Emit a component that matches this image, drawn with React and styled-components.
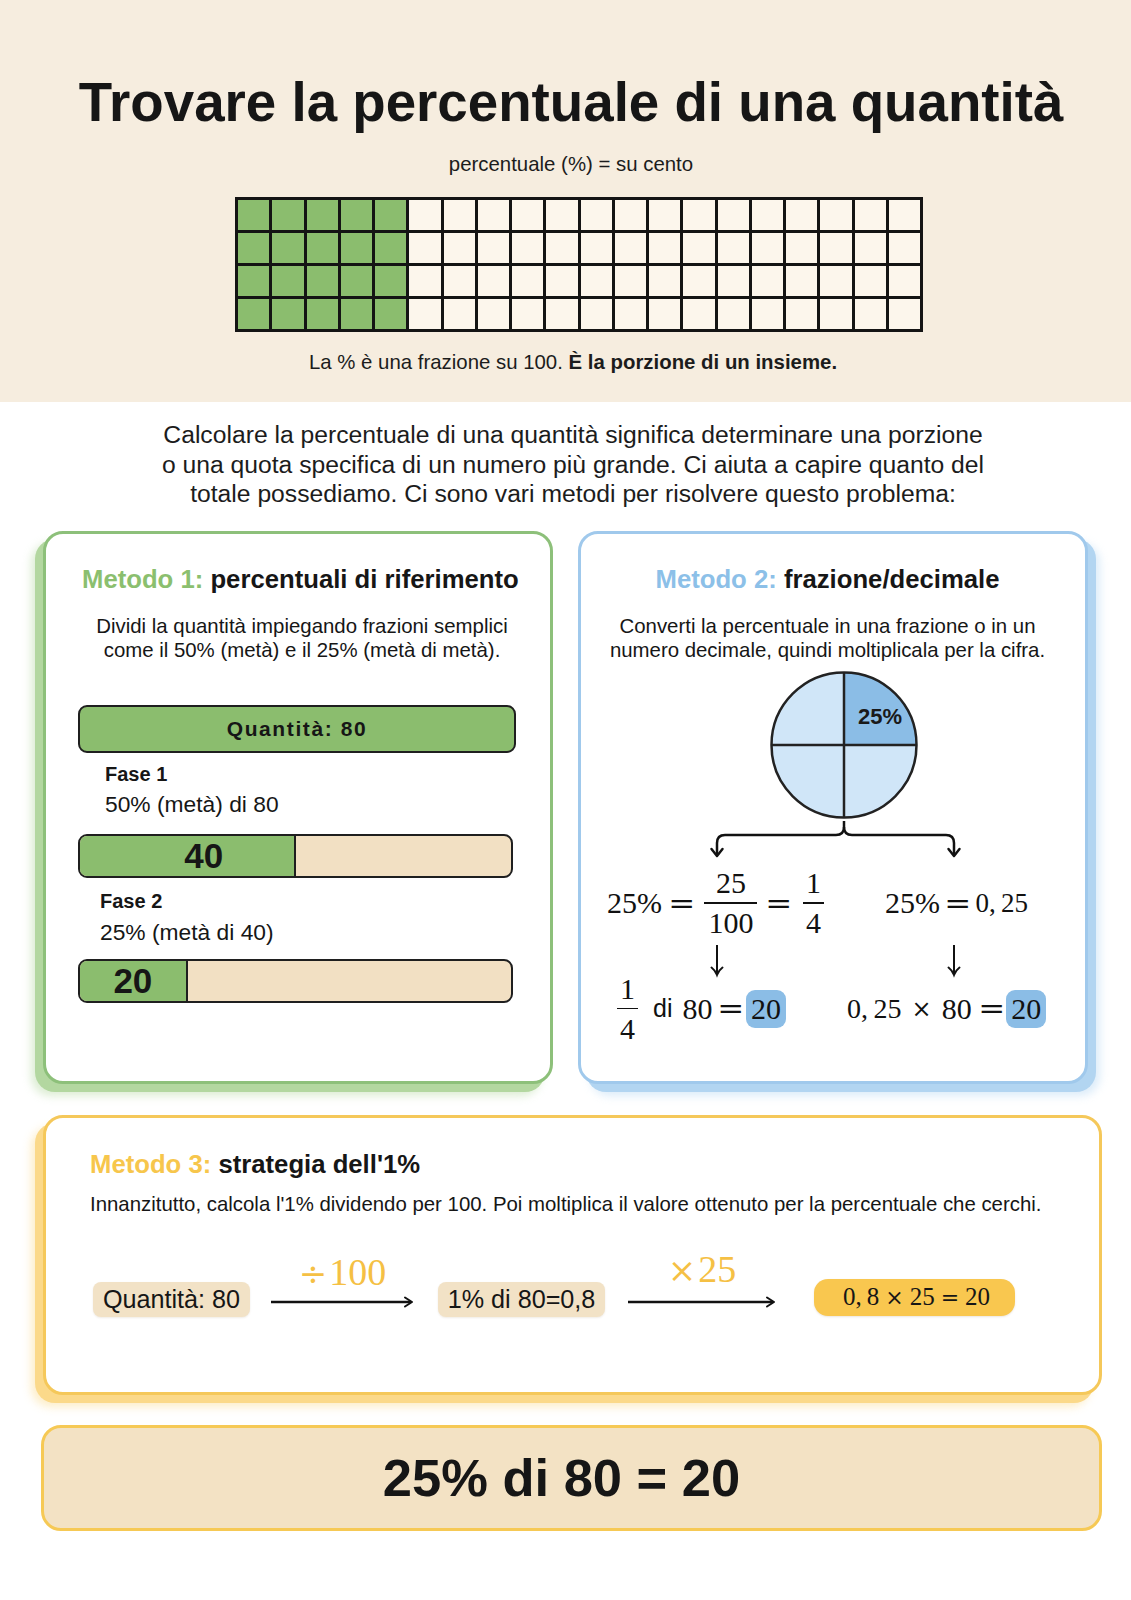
import React from 'react';
import styled, { createGlobalStyle } from 'styled-components';

const GlobalStyle = createGlobalStyle`
  html, body { margin: 0; padding: 0; background: #ffffff; }
  body { font-family: "Liberation Sans", Arial, sans-serif; color: #161616; }
  * { box-sizing: border-box; }
`;

const Page = styled.div`
  width: 1131px;
  min-height: 1600px;
  background: #ffffff;
  padding-bottom: 69px;
`;

const Header = styled.header`
  background: #f6eddf;
  padding: 70px 0 28px 11px;
  display: flex;
  flex-direction: column;
  align-items: center;
`;

const Title = styled.h1`
  margin: 0;
  font-size: 54.7px;
  line-height: 65px;
  font-weight: 700;
  color: #161616;
`;

const Sub = styled.p`
  margin: 17px 0 0;
  font-size: 20.4px;
  line-height: 24px;
  color: #1c1c1c;
`;

const HundredGrid = styled.div`
  margin: 21px 0 0 16px;
  display: grid;
  grid-template-columns: repeat(20, 31.25px);
  grid-auto-rows: 30px;
  gap: 3px;
  padding: 3px;
  background: #141414;
`;

const Cell = styled.div`
  background: ${(p) => (p.$filled ? '#8bbd6e' : '#fcf6ec')};
`;

const Caption = styled.p`
  margin: 18px 0 0 4px;
  font-size: 20.4px;
  line-height: 24px;
  color: #1c1c1c;
  b { font-weight: 700; }
`;

const Intro = styled.p`
  margin: 18px 0 0;
  padding-left: 15px;
  text-align: center;
  font-size: 24.7px;
  line-height: 29.5px;
  color: #1c1c1c;
`;

const CardsRow = styled.div`
  margin-top: 22px;
  padding-left: 43px;
  display: grid;
  grid-template-columns: 510px 510px;
  gap: 25px;
  align-items: stretch;
`;

const Card = styled.section`
  background: #ffffff;
  border: 3px solid ${(p) => p.$border};
  border-radius: 20px;
  box-shadow: ${(p) => p.$sx}px 8px 0 ${(p) => p.$shadow},
    ${(p) => p.$sx * 1.5}px 12px 8px ${(p) => p.$glow};
  padding: ${(p) => p.$pad};
`;

const CardTitle = styled.h2`
  margin: 0;
  padding: 0 ${(p) => p.$pr || 0}px 0 ${(p) => p.$pl || 0}px;
  font-size: 25.7px;
  line-height: 30.6px;
  font-weight: 700;
  color: #161616;
  text-align: ${(p) => p.$align || 'center'};
  white-space: nowrap;
`;

const Accent = styled.span`
  color: ${(p) => p.$color};
`;

const CardDesc = styled.p`
  margin: ${(p) => p.$mt || 21}px 0 0;
  padding: 0 ${(p) => p.$pr || 0}px 0 ${(p) => p.$pl || 0}px;
  font-size: 20.4px;
  line-height: ${(p) => p.$lh || 23.5}px;
  text-align: ${(p) => p.$align || 'center'};
  color: #161616;
  white-space: nowrap;
`;

const QuantityBar = styled.div`
  margin-top: 43px;
  height: 48px;
  border: 2.5px solid #1f1f1f;
  border-radius: 9px;
  background: #8bbd6e;
  display: flex;
  align-items: center;
  justify-content: center;
  font-size: 21px;
  font-weight: 700;
  letter-spacing: 1.6px;
  color: #161616;
`;

const StepLabel = styled.div`
  margin: ${(p) => p.$mt}px 0 0 ${(p) => p.$indent}px;
  font-size: 20px;
  line-height: 24px;
  font-weight: 700;
`;

const StepText = styled.div`
  margin: ${(p) => p.$mt}px 0 0 ${(p) => p.$indent}px;
  font-size: 22.8px;
  line-height: 26px;
`;

const SplitBar = styled.div`
  margin-top: ${(p) => p.$mt}px;
  width: 435px;
  height: 44px;
  border: 2.5px solid #1f1f1f;
  border-radius: 9px;
  overflow: hidden;
  display: flex;
  background: #f2e0c3;
`;

const Segment = styled.div`
  width: ${(p) => p.$pct}%;
  background: #8bbd6e;
  border-right: 2.5px solid #1f1f1f;
  display: flex;
  align-items: center;
  justify-content: center;
  padding-left: ${(p) => p.$shift || 0}px;
  font-size: 35px;
  font-weight: 700;
  color: #161616;
`;

const PieWrap = styled.div`
  margin: 9px 0 0 189px;
  width: 148px;
  height: 148px;
  svg { display: block; }
`;

const Brace = styled.svg`
  display: block;
  margin-top: 2px;
`;

const MathGrid = styled.div`
  margin-top: 9px;
  display: grid;
  grid-template-columns: 262px 242px;
  align-items: center;
`;

const MathCell = styled.div`
  display: flex;
  align-items: center;
  height: ${(p) => (p.$h ? `${p.$h}px` : 'auto')};
  margin-top: ${(p) => p.$mt || 0}px;
  padding-left: ${(p) => p.$x}px;
  font-family: "Liberation Serif", "DejaVu Serif", serif;
  font-size: 30px;
  color: #111111;
  white-space: nowrap;
  svg { display: block; overflow: visible; }
`;

const Decimal = styled.span`
  font-size: ${(p) => p.$fs || 30}px;
`;

const Op = styled.span`
  display: inline-block;
  margin: 0 ${(p) => p.$mr ?? p.$m ?? 8}px 0 ${(p) => p.$m ?? 8}px;
  font-family: "DejaVu Serif", "Liberation Serif", serif;
  font-size: ${(p) => p.$fs || 28}px;
  text-align: center;
  transform: scaleX(${(p) => p.$sx || 1.15});
`;

const Frac = styled.span`
  display: inline-flex;
  flex-direction: column;
  align-items: center;
`;

const Num = styled.span`
  line-height: 30px;
  padding: 0 ${(p) => p.$px || 4}px 4px;
`;

const FracBar = styled.span`
  align-self: stretch;
  height: 1.5px;
  background: #111111;
`;

const Den = styled.span`
  line-height: 30px;
  padding: 4.5px ${(p) => p.$px || 4}px 0;
`;

const SansWord = styled.span`
  font-family: "Liberation Sans", Arial, sans-serif;
  font-size: 25px;
  margin: 0 10px 0 15px;
`;

const Highlight = styled.span`
  background: #8bbde6;
  border-radius: 9px;
  padding: 4px 5px;
  line-height: 30px;
`;

const WideCard = styled(Card)`
  margin: 31px 0 0 43px;
  width: 1059px;
`;

const FlowRow = styled.div`
  margin-top: 34px;
  padding-left: 3px;
  display: flex;
  align-items: flex-end;
`;

const Chip = styled.div`
  margin-left: ${(p) => p.$ml || 0}px;
  width: ${(p) => p.$w}px;
  height: 35px;
  background: #f2e2c6;
  border-radius: 8px;
  display: flex;
  align-items: center;
  justify-content: center;
  font-size: 25.2px;
  color: #161616;
  white-space: nowrap;
  box-shadow: 0 1px 2px rgba(120, 90, 40, 0.12);
`;

const ResultChip = styled.div`
  margin: 0 0 1px ${(p) => p.$ml || 0}px;
  width: 201px;
  height: 37px;
  background: #f9c74f;
  border-radius: 14px;
  display: flex;
  align-items: center;
  justify-content: center;
  padding-left: 4px;
  font-family: "Liberation Serif", "DejaVu Serif", serif;
  font-size: 25px;
  color: #161616;
  white-space: nowrap;
  box-shadow: 0 1px 2px rgba(120, 90, 40, 0.15);
`;

const MiniOp = styled.span`
  margin: 0 6px;
  font-family: "DejaVu Serif", "Liberation Serif", serif;
  font-size: 22px;
`;

const ArrowBlock = styled.div`
  margin: 0 0 9px ${(p) => p.$ml}px;
  width: ${(p) => p.$w}px;
  display: flex;
  flex-direction: column;
  align-items: center;
  svg { display: block; }
`;

const ArrowLabel = styled.div`
  font-family: "Liberation Serif", "DejaVu Serif", serif;
  font-size: 38px;
  line-height: 38px;
  color: #f5c044;
  margin-bottom: ${(p) => p.$mb || 4}px;
  white-space: nowrap;
  span {
    font-family: "DejaVu Serif", "Liberation Serif", serif;
    font-size: 34px;
    margin-right: 2px;
  }
`;

const FinalBox = styled.div`
  margin: 30px 0 0 41px;
  width: 1061px;
  height: 106px;
  border: 3px solid #f6c955;
  border-radius: 20px;
  background: #f3e2c4;
  display: flex;
  align-items: center;
  justify-content: center;
  padding-right: 20px;
  font-size: 52.5px;
  font-weight: 700;
  color: #161616;
`;

const LongArrow = ({ w }) => (
  <svg width={w} height="12" viewBox={`0 0 ${w} 12`}>
    <line x1="0" y1="6" x2={w - 3} y2="6" stroke="#111" strokeWidth="2.5" />
    <path d={`M${w - 9} 1.5 L${w - 2} 6 L${w - 9} 10.5`} fill="none" stroke="#111" strokeWidth="2" strokeLinecap="round" strokeLinejoin="round" />
  </svg>
);

const DownArrow = () => (
  <svg width="16" height="31" viewBox="0 0 16 31">
    <line x1="8" y1="0" x2="8" y2="29" stroke="#111" strokeWidth="2" />
    <path d="M2.5 22.5 Q6 25 8 30 Q10 25 13.5 22.5" fill="none" stroke="#111" strokeWidth="2" strokeLinecap="round" />
  </svg>
);

const Pie = () => (
  <svg width="148" height="148" viewBox="0 0 148 148">
    <circle cx="74" cy="74" r="72.5" fill="#d0e6f8" />
    <path d="M74 74 L74 1.5 A72.5 72.5 0 0 1 146.5 74 Z" fill="#8bbde6" />
    <line x1="74" y1="1.5" x2="74" y2="146.5" stroke="#222" strokeWidth="2.5" />
    <line x1="1.5" y1="74" x2="146.5" y2="74" stroke="#222" strokeWidth="2.5" />
    <circle cx="74" cy="74" r="72.5" fill="none" stroke="#222" strokeWidth="2.5" />
    <text x="110" y="53" textAnchor="middle" fontFamily="Liberation Sans, Arial, sans-serif" fontWeight="700" fontSize="22" fill="#1a1a1a">25%</text>
  </svg>
);

const BraceArrows = () => (
  <Brace width="504" height="38" viewBox="0 0 504 38">
    <path d="M263 0 V6 Q263 14 255 14 H144 Q136 14 136 22 V33" fill="none" stroke="#111" strokeWidth="2.5" />
    <path d="M263 6 Q263 14 271 14 H365 Q373 14 373 22 V33" fill="none" stroke="#111" strokeWidth="2.5" />
    <path d="M130.5 28 L136 35 L141.5 28" fill="none" stroke="#111" strokeWidth="2.5" strokeLinecap="round" strokeLinejoin="round" />
    <path d="M367.5 28 L373 35 L378.5 28" fill="none" stroke="#111" strokeWidth="2.5" strokeLinecap="round" strokeLinejoin="round" />
  </Brace>
);

export default function App() {
  const cells = [];
  for (let r = 0; r < 4; r++) {
    for (let c = 0; c < 20; c++) {
      cells.push(<Cell key={`${r}-${c}`} $filled={c < 5} />);
    }
  }

  return (
    <Page>
      <GlobalStyle />
      <Header>
        <Title>Trovare la percentuale di una quantità</Title>
        <Sub>percentuale (%) = su cento</Sub>
        <HundredGrid>{cells}</HundredGrid>
        <Caption>
          La % è una frazione su 100. <b>È la porzione di un insieme.</b>
        </Caption>
      </Header>

      <Intro>
        Calcolare la percentuale di una quantità significa determinare una porzione
        <br />
        o una quota specifica di un numero più grande. Ci aiuta a capire quanto del
        <br />
        totale possediamo. Ci sono vari metodi per risolvere questo problema:
      </Intro>

      <CardsRow>
        <Card
          $border="#8dc07a"
          $shadow="#b3d7a0"
          $glow="rgba(180, 216, 160, 0.45)"
          $sx={-8}
          $pad="30px 34px 78px 32px"
        >
          <CardTitle $pl={4}>
            <Accent $color="#8bbf6f">Metodo 1:</Accent> percentuali di riferimento
          </CardTitle>
          <CardDesc $pl={10}>
            Dividi la quantità impiegando frazioni semplici
            <br />
            come il 50% (metà) e il 25% (metà di metà).
          </CardDesc>
          <QuantityBar>Quantità: 80</QuantityBar>
          <StepLabel $mt={9} $indent={27}>Fase 1</StepLabel>
          <StepText $mt={5} $indent={27}>50% (metà) di 80</StepText>
          <SplitBar $mt={17}>
            <Segment $pct={50} $shift={34}>40</Segment>
          </SplitBar>
          <StepLabel $mt={11} $indent={22}>Fase 2</StepLabel>
          <StepText $mt={6} $indent={22}>25% (metà di 40)</StepText>
          <SplitBar $mt={14}>
            <Segment $pct={25}>20</Segment>
          </SplitBar>
        </Card>

        <Card
          $border="#a0c9ec"
          $shadow="#b2d5f1"
          $glow="rgba(178, 213, 241, 0.45)"
          $sx={8}
          $pad="30px 0 30px 0"
        >
          <CardTitle $pr={11}>
            <Accent $color="#8cc0e8">Metodo 2:</Accent> frazione/decimale
          </CardTitle>
          <CardDesc $pr={11}>
            Converti la percentuale in una frazione o in un
            <br />
            numero decimale, quindi moltiplicala per la cifra.
          </CardDesc>
          <PieWrap>
            <Pie />
          </PieWrap>
          <BraceArrows />
          <MathGrid>
            <MathCell $x={26}>
              <span>25%</span>
              <Op $m={8} $mr={11}>=</Op>
              <Frac>
                <Num>25</Num>
                <FracBar />
                <Den>100</Den>
              </Frac>
              <Op $m={10} $mr={12}>=</Op>
              <Frac>
                <Num $px={3}>1</Num>
                <FracBar />
                <Den $px={3}>4</Den>
              </Frac>
            </MathCell>
            <MathCell $x={42}>
              <span>25%</span>
              <Op $m={6}>=</Op>
              <Decimal $fs={27}>0,&thinsp;25</Decimal>
            </MathCell>

            <MathCell $x={128} $mt={9.5} $h={26}>
              <DownArrow />
            </MathCell>
            <MathCell $x={103} $mt={9.5} $h={26}>
              <DownArrow />
            </MathCell>

            <MathCell $x={36}>
              <Frac>
                <Num $px={3}>1</Num>
                <FracBar />
                <Den $px={3}>4</Den>
              </Frac>
              <SansWord>di</SansWord>
              <span>80</span>
              <Op $m={7} $mr={3}>=</Op>
              <Highlight>20</Highlight>
            </MathCell>
            <MathCell $x={4}>
              <Decimal $fs={28}>0,&thinsp;25</Decimal>
              <Op $m={10} $fs={24} $sx={1}>×</Op>
              <span>80</span>
              <Op $m={8} $mr={3}>=</Op>
              <Highlight>20</Highlight>
            </MathCell>
          </MathGrid>
        </Card>
      </CardsRow>

      <WideCard
        $border="#f5c85a"
        $shadow="#fbd98a"
        $glow="rgba(251, 217, 138, 0.45)"
        $sx={-8}
        $pad="31px 0 75px 44px"
      >
        <CardTitle $align="left">
          <Accent $color="#f7c64c">Metodo 3:</Accent> strategia dell'1%
        </CardTitle>
        <CardDesc $align="left" $mt={12} $lh={24}>
          Innanzitutto, calcola l'1% dividendo per 100. Poi moltiplica il valore ottenuto per la percentuale che cerchi.
        </CardDesc>
        <FlowRow>
          <Chip $w={157}>Quantità: 80</Chip>
          <ArrowBlock $ml={21} $w={143}>
            <ArrowLabel>
              <span>÷</span>100
            </ArrowLabel>
            <LongArrow w={143} />
          </ArrowBlock>
          <Chip $ml={24} $w={167}>1% di 80=0,8</Chip>
          <ArrowBlock $ml={23} $w={148}>
            <ArrowLabel $mb={7}>
              <span>×</span>25
            </ArrowLabel>
            <LongArrow w={148} />
          </ArrowBlock>
          <ResultChip $ml={38}>
            0,&thinsp;8<MiniOp>×</MiniOp>25<MiniOp>=</MiniOp>20
          </ResultChip>
        </FlowRow>
      </WideCard>

      <FinalBox>25% di 80 = 20</FinalBox>
    </Page>
  );
}
